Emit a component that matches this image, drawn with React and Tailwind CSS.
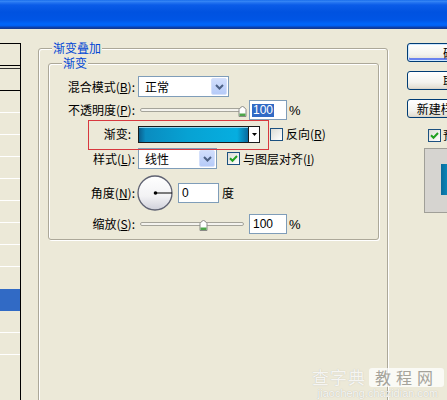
import React from "react";

function Chevron() {
  return (
    <svg width="9" height="6" viewBox="0 0 9 6">
      <path d="M1 1 L4.5 4.5 L8 1" fill="none" stroke="#4d6185" strokeWidth="2" />
    </svg>
  );
}

function Select({ w, text }) {
  return (
    <div className={`${w} h-[21px] bg-white border border-[#7f9db9] flex items-center pl-[6px] pr-[1px] shrink-0`}>
      <span className="flex-1 leading-[14px]">{text}</span>
      <div className="w-[16px] h-[17px] rounded-[2px] border border-[#d5e0fb] bg-[linear-gradient(to_bottom,#d1defc,#b6cbf8)] flex items-center justify-center">
        <Chevron />
      </div>
    </div>
  );
}

function Check({ checked }) {
  return (
    <div className="w-[13px] h-[13px] border border-[#1c5180] bg-[linear-gradient(135deg,#dcdcd5,#ffffff)] flex items-center justify-center shrink-0">
      {checked && (
        <svg width="9" height="9" viewBox="0 0 9 9">
          <path d="M1 4.2 L3.5 6.7 L8 2" fill="none" stroke="#21a121" strokeWidth="2" />
        </svg>
      )}
    </div>
  );
}

function Thumb() {
  return (
    <svg width="9" height="13" viewBox="0 0 9 13">
      <path d="M1 5.5 Q4.5 -0.5 8 5.5 V12.5 H1 Z" fill="#ffffff" stroke="#8a8a86" strokeWidth="1" />
      <rect x="1.5" y="9.5" width="6" height="2.5" fill="#4ea64a" />
    </svg>
  );
}

function Slider({ thumbLeft }) {
  return (
    <div className="relative w-[108px] h-[20px] flex items-center shrink-0">
      <div className="mx-[2px] flex-1 h-[4px] rounded-full border border-[#a5a49a] bg-[#f4f3ee]" />
      <div className={`absolute top-[4px] ${thumbLeft}`}>
        <Thumb />
      </div>
    </div>
  );
}

function NumBox({ w, children }) {
  return (
    <div className={`${w} h-[20px] bg-white border border-[#7f9db9] flex items-center pl-[2px] font-['Liberation_Sans',sans-serif] text-[12px] shrink-0`}>
      {children}
    </div>
  );
}

function Label({ children, extra = "" }) {
  return <div className={`w-[86px] shrink-0 text-right leading-[14px] ${extra}`}>{children}</div>;
}

function U({ children }) {
  return <span className="underline underline-offset-1">{children}</span>;
}

function Dial() {
  return (
    <svg width="36" height="36" viewBox="0 0 36 36" className="ml-[2px] shrink-0">
      <defs>
        <linearGradient id="dg" x1="0" y1="0" x2="0" y2="1">
          <stop offset="0" stopColor="#ffffff" />
          <stop offset="0.6" stopColor="#f2f2f4" />
          <stop offset="1" stopColor="#cfd0da" />
        </linearGradient>
      </defs>
      <circle cx="18" cy="18" r="17" fill="url(#dg)" stroke="#5f6272" strokeWidth="1.3" />
      <line x1="18" y1="18" x2="35" y2="18" stroke="#000" strokeWidth="1" />
      <circle cx="18.5" cy="18" r="1.8" fill="#000" />
    </svg>
  );
}

function XPButton({ children, def }) {
  return (
    <div
      className={`w-[96px] h-[19px] shrink-0 rounded-[3px] border border-[#003c74] bg-[linear-gradient(to_bottom,#ffffff,#f3f3ef_60%,#e4e1d6_90%,#d6d0c5)] flex items-center justify-center leading-[14px] ${
        def ? "shadow-[inset_0_0_0_1px_#cee7ff,inset_0_-2px_0_1px_#6982ee]" : ""
      }`}
    >
      {children}
    </div>
  );
}

const rowBorderWhite = "h-[22px] border-b border-white";

export default function App() {
  return (
    <div className="w-[447px] h-[400px] overflow-hidden bg-[#ECE9D8] relative flex flex-col font-['Noto_Sans_CJK_SC',sans-serif] text-[12px] leading-none text-black">
      {/* title bar */}
      <div className="h-[29px] shrink-0 bg-[linear-gradient(to_bottom,#0a5fe6_0px,#3b8cf7_1px,#2a7af2_2px,#0a5ce8_5px,#0052e0_12px,#0055e5_20px,#0066fa_24px,#005ef0_26px,#0a44b5_27px,#15378c_29px)]" />

      <div className="flex flex-1 min-h-0">
        {/* left style list */}
        <div className="w-[21px] shrink-0 mt-[14px] border-t border-r border-black flex flex-col">
          <div className="h-[22px] border-b border-black" />
          <div className="h-[3px] border-b border-[#333]" />
          <div className="h-[22px] border-b border-black" />
          <div className={rowBorderWhite} />
          <div className={rowBorderWhite} />
          <div className={rowBorderWhite} />
          <div className={rowBorderWhite} />
          <div className={rowBorderWhite} />
          <div className={rowBorderWhite} />
          <div className={rowBorderWhite} />
          <div className={rowBorderWhite} />
          <div className="h-[22px]" />
          <div className="h-[22px] bg-[#316ac5]" />
          <div className={rowBorderWhite} />
          <div className={rowBorderWhite} />
        </div>

        {/* outer group 渐变叠加 */}
        <div className="relative ml-[17px] mt-[19px] w-[350px] h-[370px] shrink-0 border border-[#aca899] rounded-[3px] shadow-[inset_1px_1px_0_#fff,1px_1px_0_#fff]">
          <span className="absolute -top-[7px] left-[13px] px-[1px] bg-[#ECE9D8] text-[#0046d5] leading-[12px]">渐变叠加</span>

          {/* inner group 渐变 */}
          <div className="relative ml-[9px] mt-[14px] w-[331px] border border-[#aca899] rounded-[3px] shadow-[inset_1px_1px_0_#fff,1px_1px_0_#fff] flex flex-col pb-[5px]">
            <span className="absolute -top-[7px] left-[13px] px-[1px] bg-[#ECE9D8] text-[#0046d5] leading-[12px]">渐变</span>

            {/* row 1 */}
            <div className="mt-[12px] h-[21px] flex items-center">
              <Label>
                混合模式(<U>B</U>):
              </Label>
              <div className="ml-[3px]">
                <Select w="w-[91px]" text="正常" />
              </div>
            </div>

            {/* row 2 */}
            <div className="mt-[3px] h-[20px] flex items-center">
              <Label>
                不透明度(<U>P</U>):
              </Label>
              <div className="ml-[3px]">
                <Slider thumbLeft="left-[100px]" />
              </div>
              <div className="ml-[3px]">
                <NumBox w="w-[38px]">
                  <span className="bg-[#316ac5] text-white leading-[13px] px-[1px]">100</span>
                </NumBox>
              </div>
              <span className="ml-[2px] font-['Liberation_Sans',sans-serif] text-[13px]">%</span>
            </div>

            {/* row 3 */}
            <div className="relative h-[28px] flex items-center">
              <Label extra="pr-[4px]">渐变:</Label>
              <div className="ml-[3px] w-[122px] h-[17px] border border-[#1a1a1a] flex shrink-0">
                <div className="flex-1 bg-[linear-gradient(to_right,#0b5f8e_0%,#0a8cc0_6%,#07a2d3_45%,#06aee0_90%,#0a6a9e_100%)] shadow-[inset_0_1px_0_#8fd3ee]" />
                <div className="w-[11px] bg-white border-l border-[#1a1a1a] flex items-center justify-center">
                  <svg width="5" height="3" viewBox="0 0 5 3">
                    <path d="M0 0 H5 L2.5 3 Z" fill="#000" />
                  </svg>
                </div>
              </div>
              <div className="ml-[10px]">
                <Check />
              </div>
              <span className="ml-[3px] leading-[14px]">
                反向(<U>R</U>)
              </span>
              <div className="absolute left-[39px] top-0 -bottom-[2px] w-[181px] border border-[#d8383e]" />
            </div>

            {/* row 4 */}
            <div className="h-[21px] flex items-center">
              <Label>
                样式(<U>L</U>):
              </Label>
              <div className="ml-[3px]">
                <Select w="w-[79px]" text="线性" />
              </div>
              <div className="ml-[10px]">
                <Check checked />
              </div>
              <span className="ml-[3px] leading-[14px]">
                与图层对齐(<U>I</U>)
              </span>
            </div>

            {/* row 5 */}
            <div className="mt-[6px] h-[36px] flex items-center">
              <Label>
                角度(<U>N</U>):
              </Label>
              <Dial />
              <div className="ml-[5px]">
                <NumBox w="w-[41px]">
                  <span className="pl-[1px]">0</span>
                </NumBox>
              </div>
              <span className="ml-[3px] leading-[14px]">度</span>
            </div>

            {/* row 6 */}
            <div className="mt-[3px] h-[20px] flex items-center">
              <Label>
                缩放(<U>S</U>):
              </Label>
              <div className="ml-[3px]">
                <Slider thumbLeft="left-[61px]" />
              </div>
              <div className="ml-[3px]">
                <NumBox w="w-[38px]">
                  <span className="pl-[1px]">100</span>
                </NumBox>
              </div>
              <span className="ml-[2px] font-['Liberation_Sans',sans-serif] text-[13px]">%</span>
            </div>
          </div>
        </div>

        {/* right column */}
        <div className="ml-[19px] mt-[14px] w-[96px] shrink-0 flex flex-col items-start">
          <XPButton def>确定</XPButton>
          <div className="mt-[9px]">
            <XPButton>取消</XPButton>
          </div>
          <div className="mt-[9px]">
            <XPButton>新建样式(W)...</XPButton>
          </div>
          <div className="mt-[10px] ml-[21px] flex items-center">
            <Check checked />
            <span className="ml-[2px] leading-[14px] whitespace-nowrap">
              预览(<U>V</U>)
            </span>
          </div>
          <div className="mt-[6px] ml-[17px] w-[70px] h-[65px] shrink-0 border border-[#a09f98] bg-[#d6d4d0] pt-[15px] pl-[16px]">
            <div className="w-[31px] h-[31px] bg-[linear-gradient(to_right,#0a6c9c,#0a92c6_30%,#0aa2d4)]" />
          </div>
        </div>
      </div>

      {/* watermark */}
      <div className="absolute left-[312px] top-[367px] flex flex-col items-center pointer-events-none">
        <div className="flex items-center">
          <span className="text-[17px] leading-[20px] text-white/85 tracking-[1px] [text-shadow:0_0_1px_#b8b6a8]">查字典</span>
          <span className="ml-[3px] px-[6px] rounded-[3px] bg-white/75 text-[16px] leading-[19px] text-[#a5a39a] tracking-[5px]">教程网</span>
        </div>
        <span className="mt-[1px] font-['Liberation_Sans',sans-serif] text-[11px] leading-[11px] text-white/90 [text-shadow:0_0_1px_#a8a698]">jiaocheng.chazidian.com</span>
      </div>
    </div>
  );
}
